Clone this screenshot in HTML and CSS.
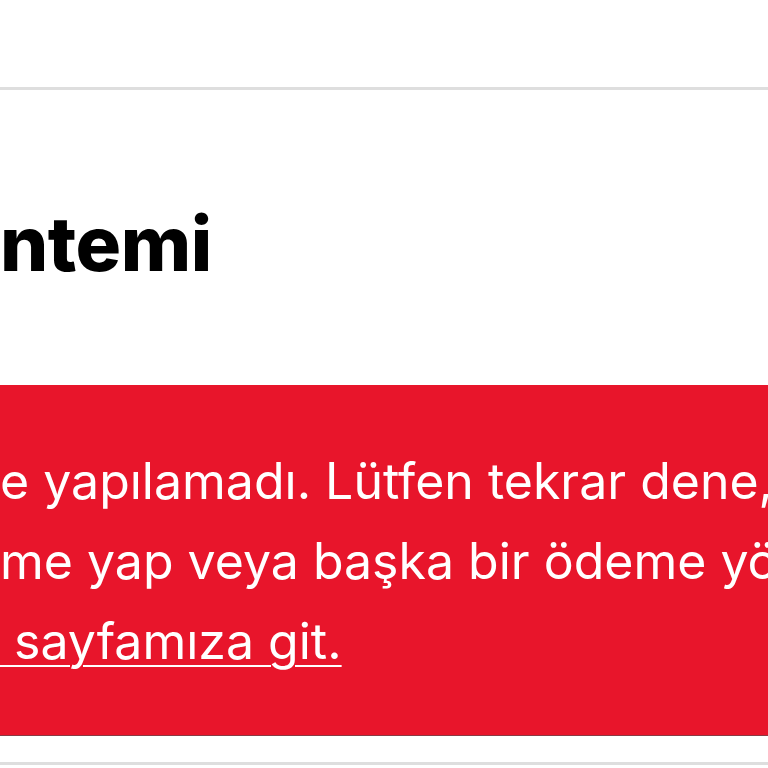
FILE: index.html
```html
<!DOCTYPE html>
<html lang="tr">
<head>
<meta charset="utf-8">
<link rel="stylesheet" href="styles.css">
</head>
<body>
<div class="page">
  <header class="topbar"></header>
  <section class="payment">
    <h1 class="title">ntemi</h1>
    <div class="alert">
      <p class="msg">
        <span class="line">e yapılamadı. Lütfen tekrar dene,</span>
        <span class="line">me yap veya başka bir ödeme yöntemi</span>
        <span class="line"><a class="link" href="#">&nbsp;sayfamıza git.</a></span>
      </p>
    </div>
  </section>
  <div class="divider"></div>
</div>
</body>
</html>
```
FILE: styles.css
```css
html, body {
  margin: 0;
  padding: 0;
  background: #ffffff;
  overflow: hidden;
}
.page {
  width: 768px;
  height: 768px;
  overflow: hidden;
  font-family: Inter, "Liberation Sans", sans-serif;
}
.topbar {
  height: 87px;
  border-bottom: 3px solid #dedede;
  background: #fff;
}
.payment {
  padding-top: 108px;
}
.title {
  margin: 0;
  font-size: 76px;
  font-weight: 800;
  line-height: 90px;
  color: #000;
  letter-spacing: -0.5px;
}
.alert {
  margin-top: 97px;
  height: 350px;
  background: #e8152b;
  border-bottom: 1px solid #8a3a44;
  overflow: hidden;
}
.msg {
  margin: 0;
  padding-top: 56px;
  color: #fff;
  font-size: 50px;
  line-height: 80px;
  letter-spacing: 0;
}
.line {
  display: block;
  white-space: nowrap;
}
.link {
  color: #fff;
  text-decoration: underline;
  text-decoration-thickness: 2px;
  text-underline-offset: 6px;
}
.divider {
  margin-top: 26px;
  border-top: 3px solid #dedede;
}
```
